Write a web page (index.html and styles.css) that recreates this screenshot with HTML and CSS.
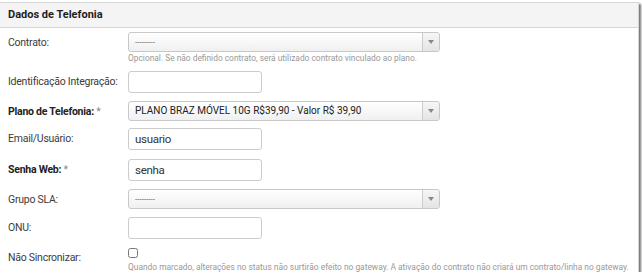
FILE: index.html
```html
<!DOCTYPE html>
<html lang="pt-BR">

<head>
    <meta charset="UTF-8">
    <meta name="viewport" content="width=device-width, initial-scale=1.0">
    <title>Dados de Telefonia</title>
    <link rel="stylesheet" href="styles.css">
</head>

<body>
    <div class="painel">
        <div class="painel-titulo">Dados de Telefonia</div>
        <div class="painel-corpo">
            <div class="linha">
                <label>Contrato:</label>
                <div class="campo">
                    <div class="combo combo-vazio"><span>---------</span><b class="seta"></b></div>
                    <p class="ajuda">Opcional. Se não definido contrato, será utilizado contrato vinculado ao plano.</p>
                </div>
            </div>
            <div class="linha">
                <label>Identificação Integração:</label>
                <div class="campo"><input type="text"></div>
            </div>
            <div class="linha linha-curta">
                <label class="obrigatorio">Plano de Telefonia: <i>*</i></label>
                <div class="campo">
                    <div class="combo"><span>PLANO BRAZ MÓVEL 10G R$39,90 - Valor R$ 39,90</span><b class="seta"></b></div>
                </div>
            </div>
            <div class="linha linha-larga">
                <label>Email/Usuário:</label>
                <div class="campo"><input type="text" value="usuario"></div>
            </div>
            <div class="linha">
                <label class="obrigatorio">Senha Web: <i>*</i></label>
                <div class="campo"><input type="text" value="senha"></div>
            </div>
            <div class="linha">
                <label>Grupo SLA:</label>
                <div class="campo">
                    <div class="combo combo-vazio"><span>---------</span><b class="seta"></b></div>
                </div>
            </div>
            <div class="linha">
                <label>ONU:</label>
                <div class="campo"><input type="text"></div>
            </div>
            <div class="linha">
                <label>Não Sincronizar:</label>
                <div class="campo">
                    <input type="checkbox" class="marcador">
                    <p class="ajuda">Quando marcado, alterações no status não surtirão efeito no gateway. A ativação do contrato não criará um contrato/linha no gateway.</p>
                </div>
            </div>
        </div>
    </div>
</body>

</html>
```

FILE: styles.css
```css
body {
    margin: 0;
    background-color: white;
    font-family: Roboto, "Liberation Sans", sans-serif;
    font-size: 11px;
    color: #3c3c3c;
}

.painel {
    width: 638px;
    height: 269px;
    margin-top: 2px;
    border-top: 1px solid #d6d6d6;
    border-right: 1px solid #d6d6d6;
    box-shadow: 2px 2px 2px rgba(0, 0, 0, 0.55);
}

.painel-titulo {
    height: 24px;
    line-height: 24px;
    padding-left: 8px;
    background-color: #f4f4f4;
    border-bottom: 1px solid #d6d6d6;
    font-weight: bold;
    color: #1e1e1e;
}

.painel-corpo {
    padding: 4px 0 0 8px;
}

.linha {
    display: flex;
    margin-bottom: 8px;
}

.linha-curta {
    margin-bottom: 7px;
}

.linha-larga {
    margin-bottom: 9px;
}

.linha label {
    width: 120px;
    flex-shrink: 0;
    padding-top: 4px;
    font-size: 10.5px;
    letter-spacing: -0.25px;
    white-space: nowrap;
}

.linha label.obrigatorio {
    font-weight: bold;
    color: #222;
}

.obrigatorio i {
    font-style: normal;
    font-weight: normal;
    color: #888;
}

.campo input[type="text"] {
    box-sizing: border-box;
    width: 134px;
    height: 22px;
    margin: 0;
    padding: 0 6px;
    border: 1px solid #ccc;
    border-radius: 3px;
    font-family: Roboto, "Liberation Sans", sans-serif;
    font-size: 11.5px;
    letter-spacing: -0.3px;
    color: #333;
}

.combo {
    box-sizing: border-box;
    position: relative;
    width: 312px;
    height: 20px;
    line-height: 18px;
    padding-left: 6px;
    border: 1px solid #c8c8c8;
    border-radius: 3px;
    background: linear-gradient(#ffffff, #f0f0f0);
    color: #222;
    font-size: 10px;
}

.combo-vazio span {
    font-size: 8px;
    letter-spacing: 0;
    color: #555;
}

.seta {
    position: absolute;
    top: 0;
    right: 0;
    width: 16px;
    height: 18px;
    border-left: 1px solid #ccc;
    background: linear-gradient(#f6f6f6, #e4e4e4);
    border-radius: 0 3px 3px 0;
}

.seta::after {
    content: "";
    position: absolute;
    left: 5px;
    top: 7px;
    border-left: 3px solid transparent;
    border-right: 3px solid transparent;
    border-top: 4px solid #888;
}

.ajuda {
    margin: 1px 0 0;
    font-size: 8.4px;
    color: #999;
    white-space: nowrap;
}

.marcador {
    width: 10px;
    height: 10px;
    margin: 1px 0 0;
}
```
